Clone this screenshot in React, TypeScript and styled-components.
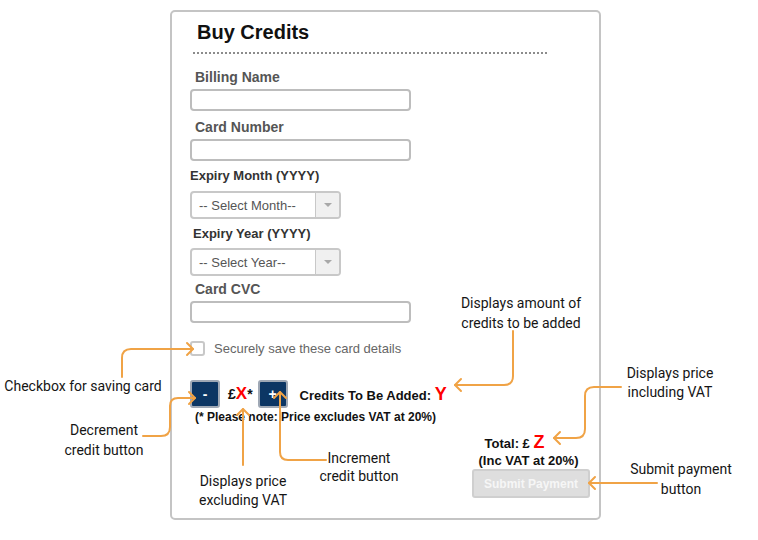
import styled, { createGlobalStyle } from "styled-components";

const GlobalStyle = createGlobalStyle`
  html, body {
    margin: 0;
    padding: 0;
    background: #ffffff;
  }
  body {
    font-family: "Liberation Sans", Arial, sans-serif;
  }
`;

const Page = styled.div`
  position: relative;
  width: 758px;
  height: 540px;
  padding: 10px 0 0 170px;
  box-sizing: border-box;
  overflow: hidden;
`;

const Card = styled.div`
  width: 431px;
  height: 510px;
  box-sizing: border-box;
  border: 2px solid #c4c4c4;
  border-radius: 5px;
  padding: 8px 8px 0 18px;
  display: flex;
  flex-direction: column;
  align-items: flex-start;
`;

const Title = styled.h1`
  margin: 0 0 0 7px;
  font-size: 20px;
  line-height: 24px;
  font-weight: bold;
  color: #111;
`;

const Rule = styled.div`
  margin: 8px 0 0 3px;
  width: 354px;
  border-top: 2px dotted #8c8c8c;
`;

const Label = styled.div<{ $top: number; $indent: number; $dark?: boolean }>`
  margin: ${(p) => p.$top}px 0 0 ${(p) => p.$indent}px;
  font-size: ${(p) => (p.$dark ? 13 : 14)}px;
  line-height: 18px;
  font-weight: bold;
  color: ${(p) => (p.$dark ? "#333" : "#555")};
`;

const TextInput = styled.div<{ $top: number }>`
  margin-top: ${(p) => p.$top}px;
  width: 221px;
  height: 22px;
  box-sizing: border-box;
  border: 2px solid #bdbdbd;
  border-radius: 4px;
  background: #fff;
`;

const Select = styled.div<{ $top: number }>`
  margin-top: ${(p) => p.$top}px;
  width: 151px;
  height: 28px;
  box-sizing: border-box;
  border: 2px solid #c8c8c8;
  border-radius: 4px;
  display: flex;
  overflow: hidden;
`;

const SelectText = styled.div`
  flex: 1;
  display: flex;
  align-items: center;
  padding-left: 7px;
  font-size: 13px;
  color: #555;
`;

const SelectArrow = styled.div`
  width: 23px;
  border-left: 1px solid #c8c8c8;
  background: #f0f0f0;
  display: flex;
  align-items: center;
  justify-content: center;
  &::after {
    content: "";
    border-left: 4px solid transparent;
    border-right: 4px solid transparent;
    border-top: 4px solid #a8a8a8;
  }
`;

const CheckRow = styled.div`
  margin-top: 18px;
  display: flex;
  align-items: center;
  gap: 9px;
  font-size: 13px;
  color: #666;
`;

const Checkbox = styled.div`
  width: 15px;
  height: 15px;
  box-sizing: border-box;
  border: 2px solid #c8c8c8;
  border-radius: 3px;
`;

const CreditRow = styled.div`
  margin-top: 24px;
  display: flex;
  align-items: center;
`;

const StepButton = styled.div`
  width: 30px;
  height: 28px;
  box-sizing: border-box;
  border: 2px solid #9fa8b5;
  border-radius: 3px;
  background: #0c3664;
  color: #fff;
  font-size: 14px;
  font-weight: bold;
  display: flex;
  align-items: center;
  justify-content: center;
`;

const Price = styled.div`
  margin: 0 5px 0 8px;
  font-size: 14px;
  font-weight: bold;
  color: #111;
`;

const Red = styled.span<{ $size: number }>`
  color: #ff0000;
  font-size: ${(p) => p.$size}px;
  font-weight: bold;
`;

const CreditsText = styled.div`
  margin-left: 12px;
  font-size: 13px;
  font-weight: bold;
  color: #111;
`;

const Note = styled.div`
  margin: 1px 0 0 5px;
  font-size: 12px;
  line-height: 16px;
  font-weight: bold;
  color: #111;
`;

const TotalBlock = styled.div`
  align-self: flex-end;
  margin-top: 8px;
  width: 125px;
  display: flex;
  flex-direction: column;
  align-items: center;
  font-weight: bold;
  color: #111;
`;

const TotalLine = styled.div`
  font-size: 13px;
  line-height: 18px;
  margin-right: 28px;
`;

const IncLine = styled.div`
  font-size: 13px;
  line-height: 15px;
`;

const SubmitButton = styled.div`
  align-self: flex-end;
  margin: 1px 1px 0 0;
  width: 118px;
  height: 29px;
  box-sizing: border-box;
  border: 2px solid #cfcfcf;
  border-radius: 3px;
  background: #dedede;
  color: #f6f6f6;
  font-size: 12px;
  font-weight: bold;
  display: flex;
  align-items: center;
  justify-content: center;
`;

const Callout = styled.div<{ $cx: number; $top: number; $lh: number }>`
  position: absolute;
  left: ${(p) => p.$cx - 100}px;
  top: ${(p) => p.$top}px;
  width: 200px;
  text-align: center;
  font-family: Roboto, "Liberation Sans", sans-serif;
  font-size: 14px;
  line-height: ${(p) => p.$lh}px;
  color: #151515;
  white-space: pre-line;
`;

const ArrowLayer = styled.svg`
  position: absolute;
  left: 0;
  top: 0;
  pointer-events: none;
`;

const callouts = [
  { text: "Checkbox for saving card", cx: 83, top: 376, lh: 20 },
  { text: "Decrement\ncredit button", cx: 104, top: 420, lh: 20 },
  { text: "Displays price\nexcluding VAT", cx: 243, top: 472, lh: 19 },
  { text: "Increment\ncredit button", cx: 359, top: 449, lh: 18 },
  { text: "Displays amount of\ncredits to be added", cx: 521, top: 293, lh: 20 },
  { text: "Displays price\nincluding VAT", cx: 670, top: 364, lh: 19 },
  { text: "Submit payment\nbutton", cx: 681, top: 459, lh: 20 },
];

const arrows = [
  { d: "M122 377 V358 Q122 349 131 349 H193", tip: [193, 349], dir: "right" },
  { d: "M143 436 H161 Q170 436 170 427 V406 Q170 398 178 398 H195", tip: [195, 398], dir: "right" },
  { d: "M243 465 V409", tip: [243, 409], dir: "up" },
  { d: "M326 460 H288 Q280 460 280 452 V392", tip: [280, 392], dir: "up" },
  { d: "M513 331 V376 Q513 385 504 385 H455", tip: [455, 385], dir: "left" },
  { d: "M621 387 H594 Q585 387 585 396 V429 Q585 438 576 438 H554", tip: [554, 438], dir: "left" },
  { d: "M657 483 H589", tip: [589, 483], dir: "left" },
];

const head = (x: number, y: number, dir: string) => {
  const s = 6;
  if (dir === "right") return `M${x - s} ${y - s} L${x} ${y} L${x - s} ${y + s}`;
  if (dir === "left") return `M${x + s} ${y - s} L${x} ${y} L${x + s} ${y + s}`;
  return `M${x - s} ${y + s} L${x} ${y} L${x + s} ${y + s}`;
};

export default function App() {
  return (
    <>
      <GlobalStyle />
      <Page>
        <Card>
          <Title>Buy Credits</Title>
          <Rule />
          <Label $top={14} $indent={5}>Billing Name</Label>
          <TextInput $top={3} />
          <Label $top={7} $indent={5}>Card Number</Label>
          <TextInput $top={3} />
          <Label $top={6} $indent={0} $dark>Expiry Month (YYYY)</Label>
          <Select $top={6}>
            <SelectText>-- Select Month--</SelectText>
            <SelectArrow />
          </Select>
          <Label $top={6} $indent={3} $dark>Expiry Year (YYYY)</Label>
          <Select $top={5}>
            <SelectText>-- Select Year--</SelectText>
            <SelectArrow />
          </Select>
          <Label $top={4} $indent={5}>Card CVC</Label>
          <TextInput $top={3} />
          <CheckRow>
            <Checkbox />
            Securely save these card details
          </CheckRow>
          <CreditRow>
            <StepButton>-</StepButton>
            <Price>
              £<Red $size={17}>X</Red>*
            </Price>
            <StepButton>+</StepButton>
            <CreditsText>
              Credits To Be Added: <Red $size={18}>Y</Red>
            </CreditsText>
          </CreditRow>
          <Note>(* Please note: Price excludes VAT at 20%)</Note>
          <TotalBlock>
            <TotalLine>
              Total: £ <Red $size={18}>Z</Red>
            </TotalLine>
            <IncLine>(Inc VAT at 20%)</IncLine>
            <SubmitButton>Submit Payment</SubmitButton>
          </TotalBlock>
        </Card>

        {callouts.map((c) => (
          <Callout key={c.text} $cx={c.cx} $top={c.top} $lh={c.lh}>
            {c.text}
          </Callout>
        ))}

        <ArrowLayer width="758" height="540" viewBox="0 0 758 540">
          {arrows.map((a, i) => (
            <g key={i} fill="none" stroke="#f0a346" strokeWidth="2" strokeLinecap="round" strokeLinejoin="round">
              <path d={a.d} />
              <path d={head(a.tip[0], a.tip[1], a.dir)} />
            </g>
          ))}
        </ArrowLayer>
      </Page>
    </>
  );
}
